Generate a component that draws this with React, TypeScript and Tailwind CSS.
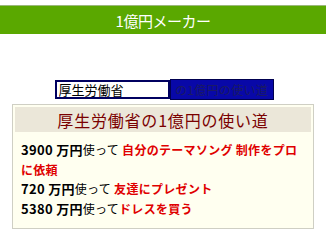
export default function App() {
  const font = { fontFamily: '"MS PGothic", "Noto Sans CJK JP", sans-serif' }
  return (
    <div className="w-[326px] h-[234px] bg-white overflow-hidden" style={font}>
      {/* title bar */}
      <div className="pt-[5px]">
        <div className="h-[29px] border-t border-[#9bb87a] bg-[#5aa800] flex items-center justify-center">
          <h1 className="text-white text-[15px] leading-none tracking-[-0.5px]">1億円メーカー</h1>
        </div>
      </div>

      {/* search form */}
      <div className="mt-[45px] flex justify-center items-center pl-[2px]">
        <input
          readOnly
          value="厚生労働省"
          className="w-[115px] h-[19px] border-2 border-[#000060] bg-white px-[2px] text-[13px] leading-none text-black outline-none"
          style={font}
        />
        <button
          className="w-[104px] h-[21px] border border-[#000050] bg-[#0808a8] text-[12px] leading-none text-[#1a1a66] tracking-[0.3px]"
          style={font}
        >
          の1億円の使い道
        </button>
      </div>

      {/* result card */}
      <div className="mx-[12px] mt-[4px] h-[125px] border border-[#cfcfc4] bg-[#fffff0] p-[2px]">
        <div className="h-[25px] bg-[#ebe7d9] flex items-center justify-center">
          <h2 className="text-[16px] leading-none text-[#7a0000] tracking-[0.8px]">厚生労働省の1億円の使い道</h2>
        </div>
        <div className="px-[6px] pt-[8px] text-[12px] leading-[19.5px] font-bold text-black tracking-[0.3px] whitespace-nowrap">
          <p>
            <span className="text-[13px]">3900 万円</span>
            <span className="font-normal">使って</span>{' '}
            <span className="text-[#e00000]">
              自分のテーマソング 制作をプロ
              <br />
              に依頼
            </span>
          </p>
          <p>
            <span className="text-[13px]">720 万円</span>
            <span className="font-normal">使って</span>{' '}
            <span className="text-[#e00000]">友達にプレゼント</span>
          </p>
          <p>
            <span className="text-[13px]">5380 万円</span>
            <span className="font-normal">使って</span>
            <span className="text-[#e00000]">ドレスを買う</span>
          </p>
        </div>
      </div>
    </div>
  )
}
